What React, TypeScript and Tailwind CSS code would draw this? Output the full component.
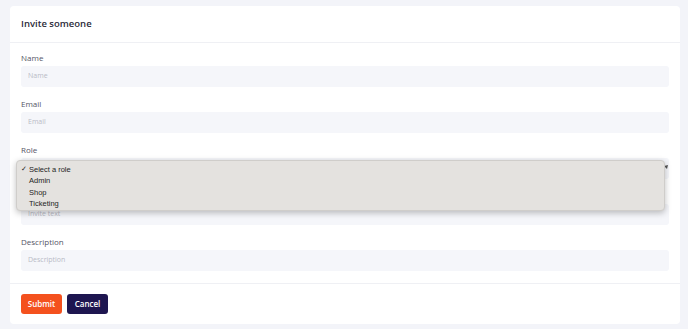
import React from 'react';

const fields = [
  { label: 'Name', placeholder: 'Name' },
  { label: 'Email', placeholder: 'Email' },
];

const roles = ['Select a role', 'Admin', 'Shop', 'Ticketing'];

const Field: React.FC<{ label: string; hideLabel?: boolean; children: React.ReactNode }> = ({ label, hideLabel, children }) => (
  <div className="flex flex-col">
    <label className={`h-[10px] text-[8px] leading-[10px] text-[#555566] ${hideLabel ? 'invisible' : ''}`}>{label}</label>
    <div className="mt-[3px]">{children}</div>
  </div>
);

const TextBox: React.FC<{ placeholder: string }> = ({ placeholder }) => (
  <div className="flex h-[21px] items-center rounded-[3px] bg-[#f5f6fa] px-[7px] text-[7px] text-[#b9bbc6]">
    {placeholder}
  </div>
);

const App: React.FC = () => {
  return (
    <div
      className="min-h-[329px] w-[688px] bg-[#f3f4f9] pt-[6px] pb-[5px] pl-[10px] pr-[8px]"
      style={{ fontFamily: '"Open Sans", Inter, sans-serif' }}
    >
      <div className="rounded-[4px] bg-white">
        {/* Header */}
        <div className="flex h-[37px] items-center border-b border-[#eff0f4] px-[11px]">
          <h1 className="text-[9.5px] font-semibold text-[#2b2b3a]">Invite someone</h1>
        </div>

        {/* Body */}
        <div className="flex flex-col gap-[12px] px-[11px] pt-[10px] pb-[12px]">
          {fields.map((f) => (
            <Field key={f.label} label={f.label}>
              <TextBox placeholder={f.placeholder} />
            </Field>
          ))}

          <Field label="Role">
            <div className="relative">
              <div className="flex h-[21px] items-center justify-end rounded-[3px] bg-[#f5f6fa] pr-[1px]">
                <svg width="4" height="4" viewBox="0 0 4 4" className="mb-[3px]">
                  <path d="M0 1 L4 0 L3 4 Z" fill="#555" />
                </svg>
              </div>
              {/* Native select popup */}
              <div
                className="absolute left-[-5px] right-[4px] top-[2px] z-10 h-[51px] rounded-[4px] border border-[#cfcdca] bg-[#e4e2df] pt-[3px] shadow-[0_2px_6px_rgba(0,0,0,0.25)]"
                style={{ fontFamily: '"Liberation Sans", Arial, sans-serif' }}
              >
                {roles.map((r, i) => (
                  <div key={r} className="flex h-[11.3px] items-center text-[7.5px] text-[#1e1e1e]">
                    <span className="w-[12px] pl-[4px] text-[7px]">{i === 0 ? '✓' : ''}</span>
                    <span>{r}</span>
                  </div>
                ))}
              </div>
            </div>
          </Field>

          <Field label="Invite text" hideLabel>
            <TextBox placeholder="Invite text" />
          </Field>

          <Field label="Description">
            <TextBox placeholder="Description" />
          </Field>
        </div>

        {/* Footer */}
        <div className="flex gap-[5px] border-t border-[#eff0f4] px-[11px] pt-[10px] pb-[10px]">
          <button className="h-[20px] w-[41px] rounded-[3px] bg-[#f4511e] text-[8px] font-semibold text-white">
            Submit
          </button>
          <button className="h-[20px] w-[41px] rounded-[3px] bg-[#1e1650] text-[8px] font-semibold text-white">
            Cancel
          </button>
        </div>
      </div>
    </div>
  );
};

export default App;
